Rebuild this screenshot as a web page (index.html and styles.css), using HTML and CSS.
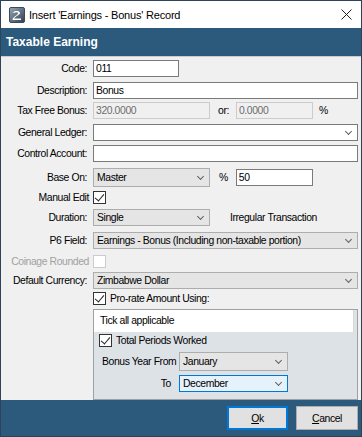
FILE: index.html
```html
<!DOCTYPE html>
<html lang="en">
<head>
    <meta charset="UTF-8">
    <title>Insert 'Earnings - Bonus' Record</title>
    <link rel="stylesheet" href="styles.css">
</head>
<body>
<div class="window">
    <div class="titlebar">
        <svg class="app-icon" width="16" height="16" viewBox="0 0 16 16">
            <defs>
                <linearGradient id="ig" x1="0" y1="0" x2="1" y2="1">
                    <stop offset="0" stop-color="#9aa7b4"/>
                    <stop offset="1" stop-color="#2d3e52"/>
                </linearGradient>
            </defs>
            <rect x="0.5" y="0.5" width="15" height="15" rx="1.5" fill="url(#ig)" stroke="#3b4b5c"/>
            <path d="M4 5.5 C4.5 3.5 11 3 11 6 C11 8 7 8.5 5 11.5 L12 11.5 L12 13 L3.5 13 C3.5 9.5 9 8.5 9 6.3 C9 4.8 6 5 5.6 6 Z" fill="#fff"/>
        </svg>
        <span class="title">Insert 'Earnings - Bonus' Record</span>
        <svg class="close" width="11" height="11" viewBox="0 0 11 11">
            <path d="M0.5 0.5 L10.5 10.5 M10.5 0.5 L0.5 10.5" stroke="#222" stroke-width="1"/>
        </svg>
    </div>

    <div class="banner">Taxable Earning</div>

    <div class="form">
        <div class="row r22">
            <label>Code:</label>
            <div class="field"><input class="text w85" value="011"></div>
        </div>
        <div class="row r20">
            <label>Description:</label>
            <div class="field"><input class="text full" value="Bonus"></div>
        </div>
        <div class="row r22">
            <label>Tax Free Bonus:</label>
            <div class="field">
                <input class="text w116 disabled" value="320.0000" disabled>
                <span class="or">or:</span>
                <input class="text w76 disabled" value="0.0000" disabled>
                <span class="pct">%</span>
            </div>
        </div>
        <div class="row r21">
            <label>General Ledger:</label>
            <div class="field"><div class="select white full"><span></span><i class="chev"></i></div></div>
        </div>
        <div class="row r23">
            <label>Control Account:</label>
            <div class="field"><input class="text full" value=""></div>
        </div>
        <div class="row r23">
            <label class="tall">Base On:</label>
            <div class="field">
                <div class="select w116 tall"><span>Master</span><i class="chev"></i></div>
                <span class="pct2">%</span>
                <input class="text w76" value="50">
            </div>
        </div>
        <div class="row r18">
            <label class="box-label">Manual Edit</label>
            <div class="field"><span class="check on"></span></div>
        </div>
        <div class="row r23">
            <label>Duration:</label>
            <div class="field">
                <div class="select w116"><span>Single</span><i class="chev"></i></div>
                <span class="note">Irregular Transaction</span>
            </div>
        </div>
        <div class="row r23">
            <label>P6 Field:</label>
            <div class="field"><div class="select full"><span>Earnings - Bonus (Including non-taxable portion)</span><i class="chev"></i></div></div>
        </div>
        <div class="row r17">
            <label class="box-label muted">Coinage Rounded</label>
            <div class="field"><span class="check off"></span></div>
        </div>
        <div class="row r20">
            <label>Default Currency:</label>
            <div class="field"><div class="select full"><span>Zimbabwe Dollar</span><i class="chev"></i></div></div>
        </div>
        <div class="row r17">
            <label></label>
            <div class="field"><span class="check on"></span><span class="check-text">Pro-rate Amount Using:</span></div>
        </div>

        <div class="panel">
            <div class="panel-head">Tick all applicable</div>
            <div class="panel-check"><span class="check on"></span><span class="check-text">Total Periods Worked</span></div>
            <div class="panel-row">
                <span class="plabel">Bonus Year From</span>
                <div class="select w108 tall"><span>January</span><i class="chev"></i></div>
            </div>
            <div class="panel-row">
                <span class="plabel right">To</span>
                <div class="select w108 focus"><span>December</span><i class="chev"></i></div>
            </div>
        </div>
    </div>

    <div class="footer">
        <button class="btn default"><u>O</u>k</button>
        <button class="btn"><u>C</u>ancel</button>
    </div>
</div>
</body>
</html>
```

FILE: styles.css
```css
*{
    box-sizing: border-box;
}
body{
    margin: 0;
    font-family: "Liberation Sans", Arial, sans-serif;
    font-size: 10.4px;
    letter-spacing: -0.4px;
    color: #000;
}
.window{
    width: 362px;
    height: 437px;
    border: 1px solid #2e4357;
    background-color: #f0f0f0;
    display: flex;
    flex-direction: column;
}

/* title bar */
.titlebar{
    height: 27px;
    background-color: #fff;
    display: flex;
    align-items: center;
    padding: 0 0 0 8px;
}
.app-icon{
    flex: none;
}
.title{
    font-size: 11px;
    letter-spacing: -0.2px;
    margin-left: 4px;
    flex: 1;
}
.close{
    margin-right: 9px;
}

.banner{
    height: 29px;
    background-color: #2b5a7d;
    color: #fff;
    font-weight: bold;
    font-size: 12px;
    letter-spacing: 0;
    line-height: 29px;
    padding-left: 5px;
    border-bottom: 1px solid #c9cdd1;
}

/* form rows */
.form{
    flex: 1;
    padding: 3px 3px 0 0;
}
.row{
    display: grid;
    grid-template-columns: 86px 1fr;
    column-gap: 6px;
    align-items: start;
}
.r17{ height: 17px; }
.r18{ height: 18px; }
.r20{ height: 20px; }
.r21{ height: 21px; }
.r22{ height: 22px; }
.r23{ height: 23px; }
.row label{
    text-align: right;
    line-height: 17px;
    white-space: nowrap;
}
.row label.tall{
    line-height: 19px;
}
.row label.box-label{
    line-height: 13px;
    margin-right: -2px;
}
.muted{
    color: #a0a0a0;
}
.field{
    display: flex;
    align-items: center;
    min-width: 0;
}

.text{
    height: 17px;
    border: 1px solid #7a7a7a;
    background-color: #fff;
    font-family: inherit;
    font-size: inherit;
    letter-spacing: inherit;
    padding: 0 2px;
    color: #000;
    outline: none;
}
.text.disabled{
    background-color: #f0f0f0;
    border-color: #cccccc;
    color: #6d6d6d;
}
.full{
    width: 100%;
}
.w85{ width: 86px; }
.w116{ width: 117px; }
.w76{ width: 77px; }
.w108{ width: 109px; }
.or{
    margin: 0 7px 0 8px;
}
.pct{
    margin-left: 6px;
}
.pct2{
    margin: 0 8px 0 9px;
}
.note{
    margin-left: 20px;
}

.select{
    height: 17px;
    border: 1px solid #adadad;
    background-color: #e5e5e5;
    display: flex;
    align-items: center;
    padding: 0 4px 0 3px;
    min-width: 0;
}
.select.tall{
    height: 19px;
}
.select.white{
    background-color: #fff;
    border-color: #7a7a7a;
}
.select.focus{
    border-color: #0078d7;
    background-color: #e5f1fb;
}
.select span{
    flex: 1;
    white-space: nowrap;
    overflow: hidden;
}
.chev{
    width: 5px;
    height: 5px;
    border-right: 1px solid #606060;
    border-bottom: 1px solid #606060;
    transform: rotate(45deg);
    margin: -3px 2px 0 4px;
    flex: none;
}

/* checkboxes */
.check{
    width: 13px;
    height: 13px;
    border: 1px solid #333;
    background-color: #fff;
    display: inline-block;
    position: relative;
    flex: none;
}
.check.on::after{
    content: "";
    position: absolute;
    left: 3px;
    top: 0px;
    width: 4px;
    height: 8px;
    border-right: 1px solid #222;
    border-bottom: 1px solid #222;
    transform: rotate(40deg);
}
.check.off{
    border-color: #cccccc;
}
.check-text{
    margin-left: 4px;
    line-height: 13px;
    white-space: nowrap;
}

/* pro-rate panel */
.panel{
    margin-left: 92px;
    height: 91px;
    border: 1px solid #a0a0a0;
    background-color: #dde2e7;
}
.panel-head{
    height: 22px;
    line-height: 22px;
    background-color: #fff;
    padding-left: 6px;
    margin-right: 3px;
    border-right: 1px solid #d9d9d9;
}
.panel-check{
    display: flex;
    align-items: center;
    padding: 2px 0 0 5px;
}
.panel-row{
    display: flex;
    align-items: center;
    margin-top: 5px;
}
.panel-row + .panel-row{
    margin-top: 4px;
}
.plabel{
    width: 85px;
    padding-left: 8px;
    white-space: nowrap;
}
.plabel.right{
    text-align: right;
    padding-right: 8px;
}

/* footer */
.footer{
    height: 36px;
    background-color: #2b5a7d;
    display: flex;
    justify-content: flex-end;
    align-items: center;
    gap: 8px;
    padding-right: 3px;
}
.btn{
    width: 62px;
    height: 24px;
    border: 1px solid #adadad;
    background-color: #e1e1e1;
    font-family: inherit;
    font-size: inherit;
    letter-spacing: inherit;
    color: #000;
    padding: 0;
}
.btn.default{
    border: 2px solid #0078d7;
    width: 61px;
}
```
